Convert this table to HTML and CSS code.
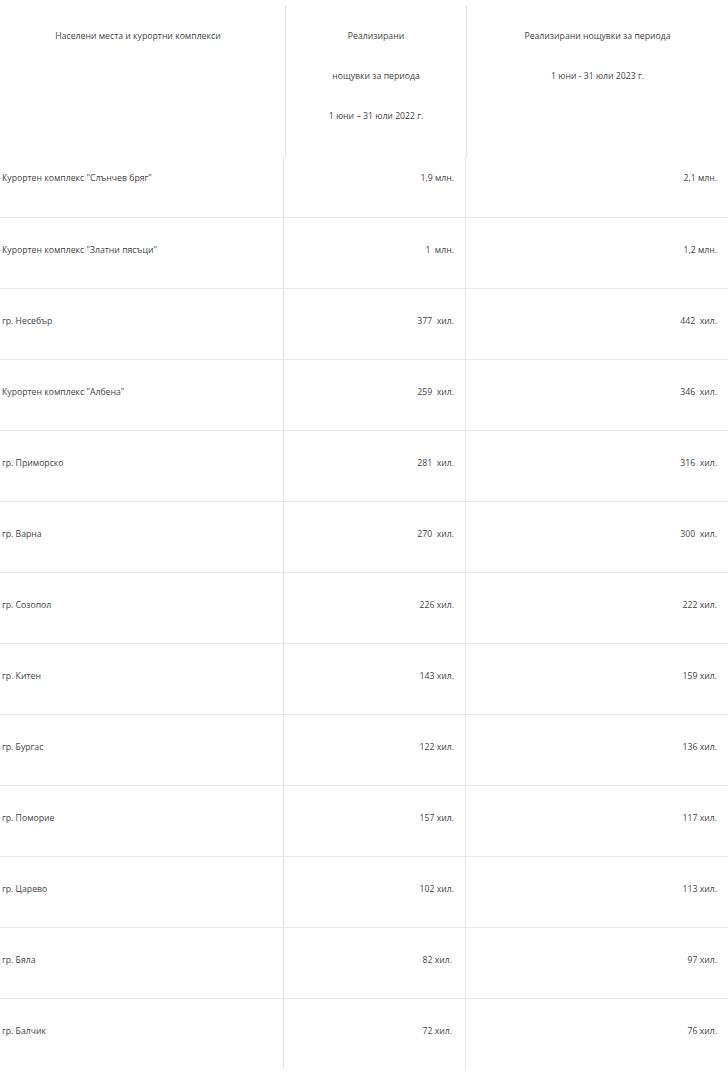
FILE: index.html
```html
<!DOCTYPE html>
<html lang="bg">
<head>
<meta charset="utf-8">
<link rel="stylesheet" href="styles.css">
</head>
<body>
<div class="wrap">
  <div class="head">
    <div class="hcell"><p>Населени места и курортни комплекси</p></div>
    <div class="hcell sep"><p>Реализирани</p><p>нощувки за периода</p><p>1 юни – 31 юли 2022 г.</p></div>
    <div class="hcell sep"><p>Реализирани нощувки за периода</p><p>1 юни - 31 юли 2023 г.</p></div>
  </div>
  <div class="body">
    <div class="row first"><div class="c name">Курортен комплекс "Слънчев бряг"</div><div class="c num">1,9 млн.</div><div class="c num">2,1 млн.</div></div>
    <div class="row"><div class="c name">Курортен комплекс "Златни пясъци"</div><div class="c num">1&nbsp; млн.</div><div class="c num">1,2 млн.</div></div>
    <div class="row"><div class="c name">гр. Несебър</div><div class="c num">377&nbsp; хил.</div><div class="c num">442&nbsp; хил.</div></div>
    <div class="row"><div class="c name">Курортен комплекс "Албена"</div><div class="c num">259&nbsp; хил.</div><div class="c num">346&nbsp; хил.</div></div>
    <div class="row"><div class="c name">гр. Приморско</div><div class="c num">281&nbsp; хил.</div><div class="c num">316&nbsp; хил.</div></div>
    <div class="row"><div class="c name">гр. Варна</div><div class="c num">270&nbsp; хил.</div><div class="c num">300&nbsp; хил.</div></div>
    <div class="row"><div class="c name">гр. Созопол</div><div class="c num">226 хил.</div><div class="c num">222 хил.</div></div>
    <div class="row"><div class="c name">гр. Китен</div><div class="c num">143 хил.</div><div class="c num">159 хил.</div></div>
    <div class="row"><div class="c name">гр. Бургас</div><div class="c num">122 хил.</div><div class="c num">136 хил.</div></div>
    <div class="row"><div class="c name">гр. Поморие</div><div class="c num">157 хил.</div><div class="c num">117 хил.</div></div>
    <div class="row"><div class="c name">гр. Царево</div><div class="c num">102 хил.</div><div class="c num">113 хил.</div></div>
    <div class="row"><div class="c name">гр. Бяла</div><div class="c num n2">82 хил.</div><div class="c num">97 хил.</div></div>
    <div class="row"><div class="c name">гр. Балчик</div><div class="c num n2">72 хил.</div><div class="c num">76 хил.</div></div>
  </div>
</div>
</body>
</html>
```

FILE: styles.css
```css
html, body {
  margin: 0;
  padding: 0;
  background: #ffffff;
}
body {
  font-family: "Open Sans", "Liberation Sans", sans-serif;
  font-size: 8.7px;
  color: #444444;
  overflow: hidden;
}
.wrap {
  margin-left: -9px;
  width: 737px;
  padding-top: 5px;
}
.head {
  display: grid;
  grid-template-columns: 294px 181px 1fr;
  height: 153px;
}
.hcell {
  padding-top: 11px;
  text-align: center;
}
.hcell p {
  margin: 0;
  line-height: 40px;
}
.sep {
  border-left: 1px solid #e4e4e4;
}
.row {
  display: grid;
  grid-template-columns: 292px 182px 1fr;
  height: 71px;
  border-top: 1px solid #e8e8e8;
  box-sizing: border-box;
}
.row.first {
  height: 59px;
  border-top: none;
}
.c {
  padding: 25px 11px 0 11px;
  line-height: 14px;
}
.row.first .c {
  padding-top: 13px;
}
.c + .c {
  border-left: 1px solid #e4e4e4;
}
.num {
  text-align: right;
}
.n2 {
  padding-right: 13px;
}
```
